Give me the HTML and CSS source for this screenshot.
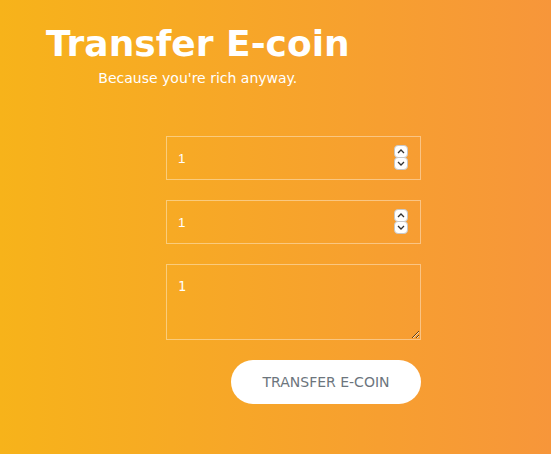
FILE: index.html
```html
<!DOCTYPE html>
<html lang="en">
<head>
    <meta charset="UTF-8">
    <meta name="viewport" content="width=device-width, initial-scale=1.0">
    <title>Transfer E-coin</title>
    <link rel="stylesheet" href="styles.css">
</head>
<body>
    <div class="page">
        <div class="header">
            <h1>Transfer E-coin</h1>
            <p>Because you're rich anyway.</p>
        </div>
        <form class="transfer">
            <div class="num">
                <input type="number" class="field" value="1">
                <div class="spin">
                    <span><svg width="8" height="5" viewBox="0 0 8 5"><path d="M1 4 L4 1 L7 4" fill="none" stroke="#333" stroke-width="1.3"/></svg></span>
                    <span><svg width="8" height="5" viewBox="0 0 8 5"><path d="M1 1 L4 4 L7 1" fill="none" stroke="#333" stroke-width="1.3"/></svg></span>
                </div>
            </div>
            <div class="num">
                <input type="number" class="field" value="1">
                <div class="spin">
                    <span><svg width="8" height="5" viewBox="0 0 8 5"><path d="M1 4 L4 1 L7 4" fill="none" stroke="#333" stroke-width="1.3"/></svg></span>
                    <span><svg width="8" height="5" viewBox="0 0 8 5"><path d="M1 1 L4 4 L7 1" fill="none" stroke="#333" stroke-width="1.3"/></svg></span>
                </div>
            </div>
            <textarea class="field note">1</textarea>
            <button type="button" class="send">TRANSFER E-COIN</button>
        </form>
    </div>
</body>
</html>
```

FILE: styles.css
```css
* {
    margin: 0;
    padding: 0;
    box-sizing: border-box;
}
html, body {
    height: 100%;
}
body {
    font-family: "DejaVu Sans", sans-serif;
    background: linear-gradient(to right, #f7b31a, #f7963a);
    color: #fff;
}
.page {
    padding: 22px 0 0 46px;
}
.header {
    display: inline-flex;
    flex-direction: column;
    align-items: center;
}
.header h1 {
    font-size: 36px;
    line-height: 44px;
    font-weight: bold;
}
.header p {
    font-size: 14px;
    line-height: 20px;
    margin-top: 2px;
}
.transfer {
    display: flex;
    flex-direction: column;
    align-items: flex-end;
    gap: 20px;
    width: 255px;
    margin: 48px 0 0 120px;
}
.field {
    display: block;
    width: 255px;
    height: 44px;
    padding: 0 30px 0 11px;
    background: transparent;
    border: 1px solid rgba(255, 255, 255, 0.4);
    color: #fff;
    outline: none;
    -moz-appearance: textfield;
}
.field::-webkit-inner-spin-button,
.field::-webkit-outer-spin-button {
    -webkit-appearance: none;
    margin: 0;
}
.num {
    position: relative;
}
.spin {
    position: absolute;
    top: 9px;
    right: 13px;
    display: flex;
    flex-direction: column;
}
.spin span {
    display: flex;
    align-items: center;
    justify-content: center;
    width: 14px;
    height: 13px;
    background: #fff;
    border: 1px solid #c8c8c8;
    border-radius: 4px;
}
.spin span + span {
    margin-top: -1px;
}
.note {
    height: 76px;
    padding: 14px 11px;
    resize: vertical;
}
.send {
    width: 190px;
    height: 44px;
    border: none;
    border-radius: 22px;
    background: #fff;
    color: #6c757d;
    font-family: "DejaVu Sans", sans-serif;
    font-size: 14px;
}
```
